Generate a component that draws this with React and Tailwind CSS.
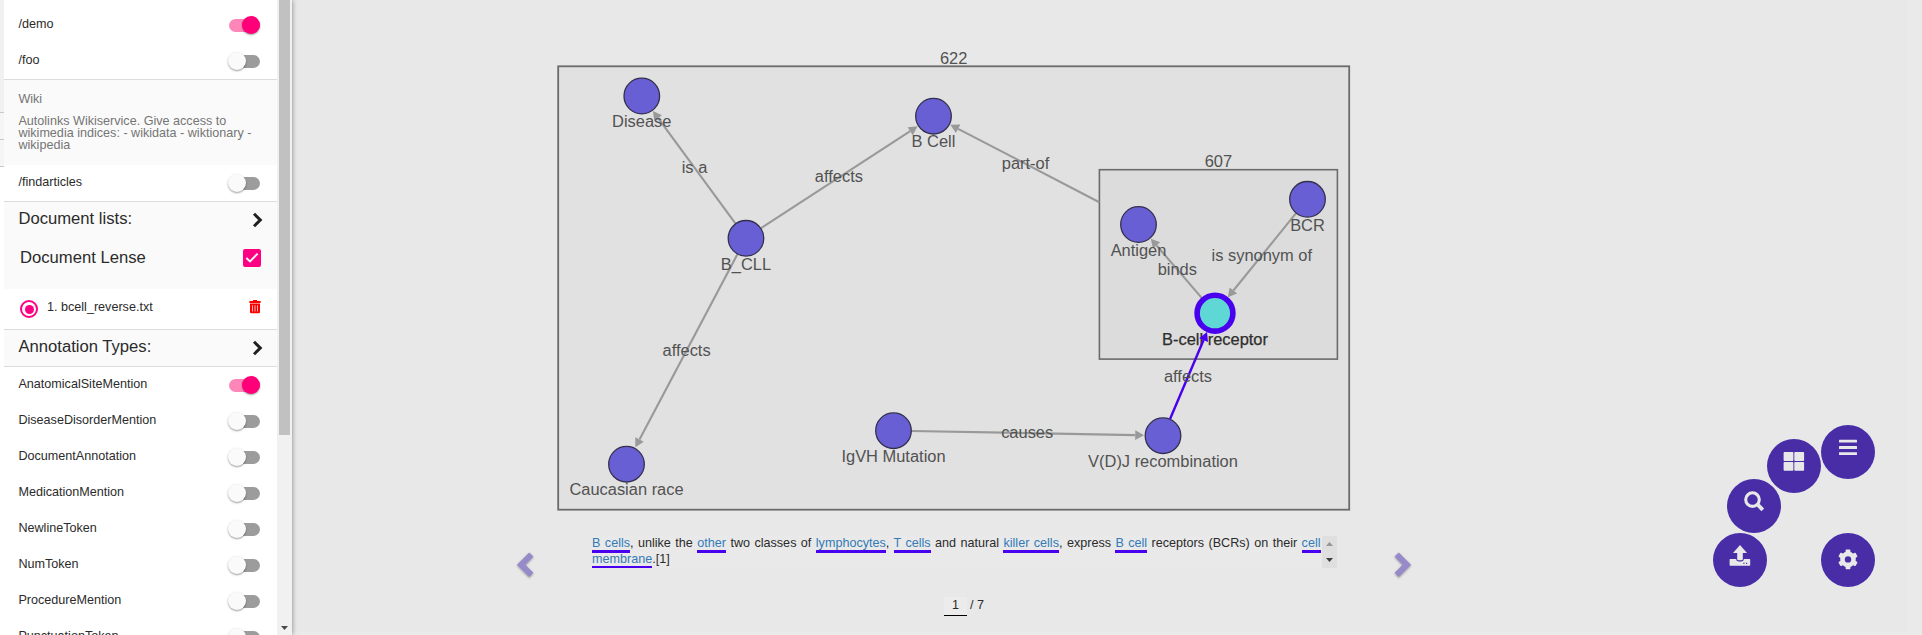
const FONT = "font-['Liberation_Sans',Arial,sans-serif]";

function Toggle({ on }) {
  return (
    <span className="relative block h-[18px] w-8 shrink-0">
      <span
        className={
          on
            ? 'absolute top-[3px] left-px h-[13px] w-[31px] rounded-full bg-[#ff86b9]'
            : 'absolute top-[3px] left-px h-[13px] w-[31px] rounded-full bg-[#9c9c9c]'
        }
      />
      <span
        className={
          on
            ? 'absolute top-0 left-[14px] size-[18px] rounded-full bg-[#ff0078] shadow-[0_1px_2px_rgba(0,0,0,0.4)]'
            : 'absolute top-0 left-0 size-[18px] rounded-full bg-[#fafafa] shadow-[0_1px_2px_rgba(0,0,0,0.4)]'
        }
      />
    </span>
  );
}

function ToggleRow({ label, on }) {
  return (
    <div className="flex h-9 shrink-0 items-center justify-between pr-[17px] pl-[14.4px]">
      <span className="pb-px">{label}</span>
      <Toggle on={on} />
    </div>
  );
}

function Chevron() {
  return (
    <svg className="h-4 w-3" viewBox="0 0 12 16" fill="none" stroke="#212121" strokeWidth="3">
      <path d="M3 1.8 9.3 8 3 14.2" />
    </svg>
  );
}

const annotationTypes = [
  'DiseaseDisorderMention',
  'DocumentAnnotation',
  'MedicationMention',
  'NewlineToken',
  'NumToken',
  'ProcedureMention',
  'PunctuationToken',
];

function Sidebar() {
  return (
    <aside className="z-10 flex h-full w-[292px] shrink-0 overflow-hidden bg-white shadow-[0_0_5px_rgba(0,0,0,0.45)]">
      <div className="w-1 shrink-0">
        <div className="h-[113px] border-b border-[#c8c8c8] bg-[#f1f1f1]" />
        <div className="h-[27px] border-b border-[#c8c8c8] bg-[#f6f6f6]" />
        <div className="h-[27px] border-b border-[#c8c8c8] bg-[#f6f6f6]" />
      </div>
      <div className="flex w-[273px] shrink-0 flex-col text-[12.6px] text-[#2b2b2b]">
        <div className="h-[7px] shrink-0" />
        <ToggleRow label="/demo" on />
        <ToggleRow label="/foo" />
        <section className="h-[86px] shrink-0 border-t border-[#dcdcdc] bg-[#fafafa] px-[14.4px] pt-3 text-[#757575]">
          <p className="leading-[14px]">Wiki</p>
          <p className="mt-[9px] leading-3">
            Autolinks Wikiservice. Give access to wikimedia indices: - wikidata - wiktionary - wikipedia
          </p>
        </section>
        <ToggleRow label="/findarticles" />
        <section className="h-[88px] shrink-0 border-t border-[#dcdcdc] bg-[#fafafa] text-[16.65px]">
          <div className="flex h-9 items-center justify-between pr-[14px] pl-[14.4px]">
            <h2 className="pb-[2px]">Document lists:</h2>
            <Chevron />
          </div>
          <div className="flex h-10 items-center justify-between pr-4 pl-4">
            <h2>Document Lense</h2>
            <span className="flex size-[18px] items-center justify-center rounded-[2px] bg-[#ff0084]">
              <svg className="size-[18px]" viewBox="0 0 18 18" fill="none" stroke="#fafafa" strokeWidth="1.9">
                <path d="M3.4 9 7 12.5 14.6 4.6" />
              </svg>
            </span>
          </div>
        </section>
        <div className="flex h-10 shrink-0 items-center pr-4 pl-4">
          <span className="flex size-[18px] items-center justify-center rounded-full border-2 border-[#ff0084]">
            <span className="size-[9px] rounded-full bg-[#ff0084]" />
          </span>
          <span className="ml-[9px] flex-1 pb-1">1. bcell_reverse.txt</span>
          <svg className="mb-1 h-[14px] w-3" viewBox="0 0 12 14" fill="#f00">
            <path d="M4 0h4v1h3.6v2H.4V1H4z" />
            <path d="M1 3.6h10V12a1.3 1.3 0 0 1-1.3 1.3H2.3A1.3 1.3 0 0 1 1 12z" />
            <path d="M3.5 5.2v6.3M6 5.2v6.3M8.5 5.2v6.3" stroke="#fff" strokeWidth=".7" />
          </svg>
        </div>
        <div className="flex h-[38px] shrink-0 items-center justify-between border-y border-[#dcdcdc] bg-[#fafafa] px-[14.4px] text-[16.65px]">
          <h2 className="pb-[2px]">Annotation Types:</h2>
          <Chevron />
        </div>
        <ToggleRow label="AnatomicalSiteMention" on />
        {annotationTypes.map((t) => (
          <ToggleRow key={t} label={t} />
        ))}
      </div>
      <div className="flex w-[15px] shrink-0 flex-col items-center justify-between bg-[#f1f1f1]">
        <div className="h-[435px] w-[11px] bg-[#c1c1c1]" />
        <svg className="mb-[5px] h-1 w-[7px]" viewBox="0 0 7 4" fill="#4a4a4a">
          <path d="M0 0h7L3.5 4z" />
        </svg>
      </div>
    </aside>
  );
}

const nodes = [
  { x: 641.8, y: 96, label: 'Disease' },
  { x: 933.5, y: 116.2, label: 'B Cell' },
  { x: 746, y: 238.3, label: 'B_CLL' },
  { x: 626.5, y: 464.2, label: 'Caucasian race' },
  { x: 893.5, y: 430.7, label: 'IgVH Mutation' },
  { x: 1163, y: 435.7, label: 'V(D)J recombination' },
  { x: 1138.5, y: 224.5, label: 'Antigen' },
  { x: 1307.5, y: 199.3, label: 'BCR' },
];

const edges = [
  { from: [746, 238], to: [641.7, 95.7], label: 'is a', at: [694.5, 173.4] },
  { from: [746, 238], to: [933.5, 116], label: 'affects', at: [838.9, 182.2] },
  { from: [746, 238], to: [626.5, 464], label: 'affects', at: [686.6, 355.5] },
  { from: [1099.3, 202.2], to: [933.5, 116], label: 'part-of', at: [1025.5, 169.4], flush: true },
  { from: [893.5, 430.6], to: [1163, 435.6], label: 'causes', at: [1027.2, 437.7] },
  { from: [1215, 313.2], to: [1138.4, 224.4], label: 'binds', at: [1177.3, 274.5] },
  { from: [1307.4, 199.2], to: [1215, 313.2], label: 'is synonym of', at: [1261.8, 260.5], big: true },
  { from: [1163, 435.6], to: [1215, 313.2], label: 'affects', at: [1188, 381.9], active: true, big: true },
];

function Edge({ from, to, active, big, flush }) {
  const dx = to[0] - from[0];
  const dy = to[1] - from[1];
  const d = Math.hypot(dx, dy);
  const ux = dx / d;
  const uy = dy / d;
  const start = flush ? 0 : 18;
  const gap = big ? 20.4 : 19;
  const tip = [to[0] - ux * gap, to[1] - uy * gap];
  const base = [tip[0] - ux * 8.8, tip[1] - uy * 8.8];
  const color = active ? '#4800ee' : '#999';
  return (
    <g fill={color} stroke="none">
      <line
        x1={from[0] + ux * start}
        y1={from[1] + uy * start}
        x2={base[0]}
        y2={base[1]}
        stroke={color}
        strokeWidth={active ? 2.4 : 2.1}
      />
      <polygon
        points={`${tip[0]},${tip[1]} ${base[0] - uy * 4.8},${base[1] + ux * 4.8} ${base[0] + uy * 4.8},${base[1] - ux * 4.8}`}
      />
    </g>
  );
}

function Graph() {
  return (
    <svg
      className="block h-[536px] w-[1630px] shrink-0 font-['Liberation_Sans',Arial,sans-serif] text-[16.45px]"
      viewBox="292 0 1630 536"
      textAnchor="middle"
      fill="#525252"
    >
      <rect x="558.2" y="66.3" width="791" height="443.4" fill="#e1e1e1" stroke="#6b6b6b" strokeWidth="1.8" />
      <rect x="1099.4" y="169.7" width="238" height="189.4" fill="#dcdcdc" stroke="#6b6b6b" strokeWidth="1.6" />
      <text x="953.6" y="63.6">622</text>
      <text x="1218.4" y="166.6">607</text>
      {edges.filter((e) => !e.active).map((e) => (
        <Edge key={e.at[0]} {...e} />
      ))}
      {nodes.map((n) => (
        <g key={n.label}>
          <circle cx={n.x} cy={n.y} r="17.8" fill="#685fd4" stroke="#33304e" strokeWidth="1.3" />
          <text x={n.x} y={n.y + 31.2}>{n.label}</text>
        </g>
      ))}
      <circle cx="1215" cy="313.2" r="17.9" fill="#5fd7d4" stroke="#4800ee" strokeWidth="5.6" />
      <text x="1215" y="344.5" fill="#2e2e2e" stroke="#2e2e2e" strokeWidth=".25">B-cell receptor</text>
      {edges.filter((e) => e.active).map((e) => (
        <Edge key={e.at[0]} {...e} />
      ))}
      {edges.map((e) => (
        <text key={e.at[0]} x={e.at[0]} y={e.at[1]}>{e.label}</text>
      ))}
    </svg>
  );
}

function Term({ children }) {
  return <a className="border-b-[3px] border-[#4800ee] text-[#337ab7]">{children}</a>;
}

function RoundButton({ className, children }) {
  return (
    <button className={`absolute size-[54px] rounded-full bg-[#482da7] ${className}`}>
      <svg className="size-[54px]" viewBox="0 0 54 54" fill="#e8e8e8">
        {children}
      </svg>
    </button>
  );
}

const gearTeeth = [0, 60, 120, 180, 240, 300];

function ActionMenu() {
  return (
    <nav className="absolute top-[425px] left-[1713px] h-[162px] w-[162px]">
      <RoundButton className="top-0 left-[108px]">
        <rect x="18" y="14.7" width="18" height="2.9" rx=".5" />
        <rect x="18" y="21" width="18" height="2.9" rx=".5" />
        <rect x="18" y="27.2" width="18" height="2.9" rx=".5" />
      </RoundButton>
      <RoundButton className="top-[14px] left-[54px]">
        <rect x="16.6" y="13.1" width="9.8" height="8.9" rx=".8" />
        <rect x="27.3" y="13.1" width="9.8" height="8.9" rx=".8" />
        <rect x="16.6" y="22.9" width="9.8" height="8.9" rx=".8" />
        <rect x="27.3" y="22.9" width="9.8" height="8.9" rx=".8" />
      </RoundButton>
      <RoundButton className="top-[54px] left-[14px]">
        <circle cx="25.5" cy="20.6" r="6.8" fill="none" stroke="#e8e8e8" strokeWidth="3.1" />
        <path d="M30.4 25.4 35.8 30.8" fill="none" stroke="#e8e8e8" strokeWidth="3.8" />
      </RoundButton>
      <RoundButton className="top-[108px] left-0">
        <path d="M27 12 34 20h-4.2v6a1.3 1.3 0 0 1-1.3 1.3h-3a1.3 1.3 0 0 1-1.3-1.3v-6H20z" />
        <path d="M17.2 26h5.9a2.6 2.6 0 0 0 2.4 2.5h3a2.6 2.6 0 0 0 2.4-2.5h5.7a.6.6 0 0 1 .6.6v5.5a.6.6 0 0 1-.6.6H17.2a.6.6 0 0 1-.6-.6v-5.5a.6.6 0 0 1 .6-.6z" />
        <rect x="30.3" y="29.7" width="1.2" height="1.2" fill="#482da7" />
        <rect x="33" y="29.7" width="1.2" height="1.2" fill="#482da7" />
      </RoundButton>
      <RoundButton className="top-[108px] left-[108px]">
        {gearTeeth.map((a) => (
          <rect key={a} x="24.6" y="16.6" width="4.8" height="6" rx=".8" transform={`rotate(${a} 27 26.4)`} />
        ))}
        <circle cx="27" cy="26.4" r="5.5" fill="none" stroke="#e8e8e8" strokeWidth="4.6" />
      </RoundButton>
    </nav>
  );
}

export default function App() {
  return (
    <div className={`relative flex h-[635px] w-[1922px] overflow-hidden bg-[#eaeaea] ${FONT}`}>
      <Sidebar />
      <main className="flex h-[632px] w-[1615px] shrink-0 flex-col bg-[#e8e8e8] text-[12.6px] text-[#2b2b2b]">
        <Graph />
        <div className="flex h-[61px] shrink-0 items-start">
          <svg className="mt-[14px] ml-[223px] h-[30px] w-5 shrink-0 drop-shadow-[0_1px_1px_rgba(0,0,0,0.35)]" viewBox="0 0 20 30" fill="#978ac9">
            <path d="M14.2 2.4 18.4 6.6 10.4 14.7 18.4 22.8 14.2 27 2 14.7z" />
          </svg>
          <div className="ml-[57px] flex h-8 w-[745px] shrink-0 overflow-hidden bg-[#e9e9e9]">
            <p className="-mt-px w-[728.5px] shrink-0 text-justify leading-4">
              <Term>B cells</Term>, unlike the <Term>other</Term> two classes of <Term>lymphocytes</Term>,{' '}
              <Term>T cells</Term> and natural <Term>killer cells</Term>, express <Term>B cell</Term> receptors
              (BCRs) on their <Term>cell membrane</Term>.[1]
            </p>
            <div className="ml-[1.5px] flex w-[15px] shrink-0 flex-col items-center justify-between bg-[#dfdfdf] py-[6px]">
              <svg className="h-1 w-[7px]" viewBox="0 0 7 4" fill="#969696">
                <path d="M0 4h7L3.5 0z" />
              </svg>
              <svg className="h-1 w-[7px]" viewBox="0 0 7 4" fill="#404040">
                <path d="M0 0h7L3.5 4z" />
              </svg>
            </div>
          </div>
          <svg className="mt-[14px] ml-[56px] h-[30px] w-5 shrink-0 drop-shadow-[0_1px_1px_rgba(0,0,0,0.35)]" viewBox="0 0 20 30" fill="#978ac9">
            <path d="M5.8 2.4 1.6 6.6 9.6 14.7 1.6 22.8 5.8 27 18 14.7z" />
          </svg>
        </div>
        <div className="flex items-start pl-[652px] leading-4">
          <span className="h-[19px] w-[23px] border-b border-black bg-[#ececec] text-center">1</span>
          <span className="ml-[3px]">/ 7</span>
        </div>
      </main>
      <ActionMenu />
    </div>
  );
}
